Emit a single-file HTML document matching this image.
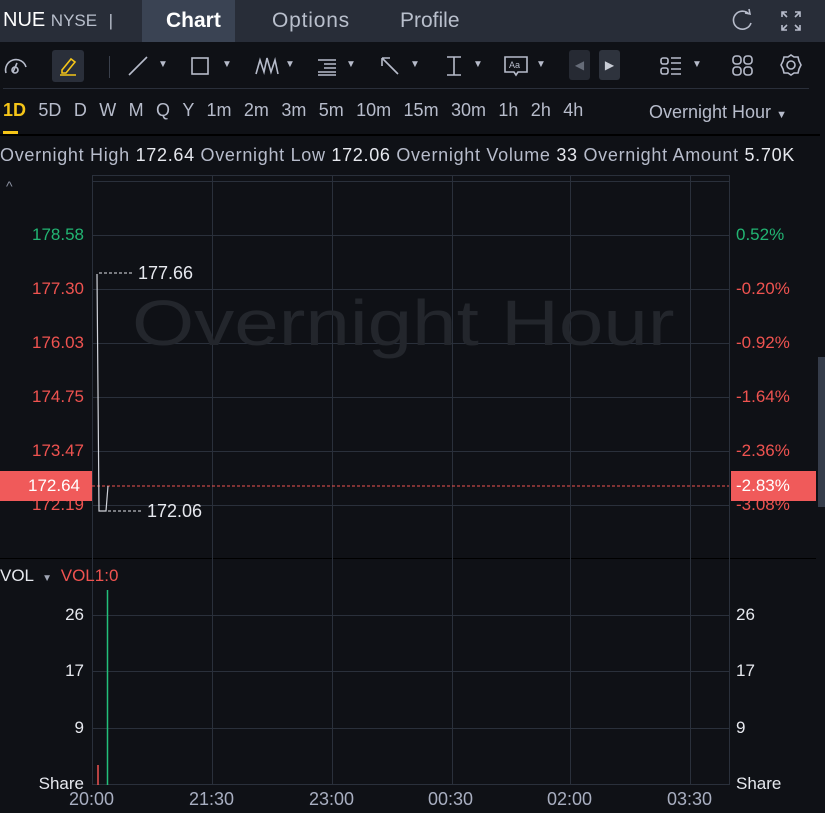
<!DOCTYPE html>
<html><head><meta charset="utf-8"><style>
*{margin:0;padding:0;box-sizing:border-box}
body{width:825px;height:813px;background:#0f1116;font-family:"Liberation Sans",sans-serif;color:#c9cdd6;position:relative;overflow:hidden}
.a{position:absolute;white-space:nowrap}
.hl{position:absolute;height:1px;background:#2a303b}
.vl{position:absolute;width:1px;background:#2a303b}
.r{color:#ef5350}.g{color:#22b573}
.lab{font-size:17px;text-align:right;width:84px;left:0}
.pl{font-size:17px;left:736px}
.tb{stroke:#b7bccb;fill:none;stroke-width:1.6}
.dd{font-size:10px;color:#b7bccb}
</style></head><body>
<!-- header -->
<div class="a" style="left:0;top:0;width:825px;height:42px;background:#282d38"></div>
<div class="a" style="left:142px;top:0;width:93px;height:42px;background:#3a4353"></div>
<div class="a" style="left:3px;top:9px;font-size:20px;color:#fff">NUE <span style="font-size:17px;color:#b9bfcc">NYSE</span> <span style="font-size:17px;color:#b9bfcc;margin-left:6px">|</span></div>
<div class="a" style="left:166px;top:9px;font-size:21px;color:#fff;font-weight:bold">Chart</div>
<div class="a" style="left:272px;top:9px;font-size:21px;color:#b9bfcc;letter-spacing:0.8px">Options</div>
<div class="a" style="left:400px;top:9px;font-size:21px;color:#b9bfcc">Profile</div>
<svg class="a" style="left:730px;top:8px" width="26" height="26"><path d="M19 6 A9 9 0 1 0 21 15" class="tb"/><path d="M15 5 L20 6 L19 1" class="tb"/></svg>
<svg class="a" style="left:780px;top:10px" width="22" height="22"><path d="M2 7V2h5M15 2h5v5M20 15v5h-5M7 20H2v-5M2 2l5 5M20 2l-5 5M20 20l-5-5M2 20l5-5" class="tb"/></svg>
<!-- toolbar -->
<svg class="a" style="left:3px;top:55px" width="26" height="22"><path d="M3 18 A10 10 0 1 1 23 12" class="tb"/><path d="M10 17 L14 8" class="tb"/><circle cx="12" cy="15" r="3" class="tb"/></svg>
<div class="a" style="left:52px;top:50px;width:32px;height:32px;background:#2a2f3a;border-radius:3px"></div>
<svg class="a" style="left:56px;top:54px" width="24" height="24"><path d="M6 16 L15 5 L19 8 L10 19 L6 19Z M4 21 H20" stroke="#f5c518" stroke-width="1.6" fill="none"/></svg>
<div class="a" style="left:109px;top:56px;width:1px;height:22px;background:#3a404c"></div>
<svg class="a" style="left:126px;top:54px" width="24" height="24"><path d="M3 21 L21 3" class="tb"/></svg><div class="a dd" style="left:158px;top:59px">▼</div>
<svg class="a" style="left:188px;top:54px" width="24" height="24"><rect x="4" y="4" width="16" height="16" class="tb"/></svg><div class="a dd" style="left:222px;top:59px">▼</div>
<svg class="a" style="left:254px;top:54px" width="26" height="24"><path d="M2 20 L6 6 L10 18 L13 4 L17 18 L21 6 L24 20" class="tb"/></svg><div class="a dd" style="left:285px;top:59px">▼</div>
<svg class="a" style="left:315px;top:54px" width="24" height="24"><path d="M3 6H21M9 10H21M9 14H21M3 18H21M3 21H21" class="tb"/></svg><div class="a dd" style="left:346px;top:59px">▼</div>
<svg class="a" style="left:378px;top:54px" width="24" height="24"><path d="M4 4L20 20M4 4H12M4 4V12" class="tb"/></svg><div class="a dd" style="left:410px;top:59px">▼</div>
<svg class="a" style="left:442px;top:54px" width="24" height="24"><path d="M5 3H19M12 3V21M5 21H19" class="tb"/></svg><div class="a dd" style="left:473px;top:59px">▼</div>
<svg class="a" style="left:503px;top:54px" width="26" height="24"><path d="M2 3H24V18H15L13 21L11 18H2Z" class="tb"/><text x="6" y="14" font-size="9" fill="#b7bccb" font-family="Liberation Sans">Aa</text></svg><div class="a dd" style="left:536px;top:59px">▼</div>
<div class="a" style="left:569px;top:50px;width:21px;height:30px;background:#262a33;border-radius:3px;color:#666c78;font-size:12px;text-align:center;line-height:30px">◀</div>
<div class="a" style="left:599px;top:50px;width:21px;height:30px;background:#2e333d;border-radius:3px;color:#c9cdd6;font-size:12px;text-align:center;line-height:30px">▶</div>
<svg class="a" style="left:659px;top:54px" width="24" height="24"><rect x="2" y="4" width="7" height="6" rx="2" class="tb"/><rect x="2" y="14" width="7" height="6" rx="2" class="tb"/><path d="M12 4H22M12 9H22M12 15H22M12 20H22" class="tb"/></svg><div class="a dd" style="left:692px;top:59px">▼</div>
<svg class="a" style="left:731px;top:54px" width="24" height="24"><rect x="2" y="2" width="8" height="8" rx="3" class="tb"/><rect x="13" y="2" width="8" height="8" rx="3" class="tb"/><rect x="2" y="13" width="8" height="8" rx="3" class="tb"/><rect x="13" y="13" width="8" height="8" rx="3" class="tb"/></svg>
<svg class="a" style="left:779px;top:53px" width="24" height="24"><path d="M12 2 L15 4 L19 4 L20 8 L22 12 L20 16 L19 20 L15 20 L12 22 L9 20 L5 20 L4 16 L2 12 L4 8 L5 4 L9 4Z" class="tb"/><circle cx="12" cy="12" r="4" class="tb"/></svg>
<div class="hl" style="left:3px;top:88px;width:806px;background:#2a2f3a"></div>
<!-- timeframe -->
<div class="a" style="left:3px;top:100px;font-size:18px;word-spacing:1.2px;color:#b7bccb"><b style="color:#f5c518;font-weight:bold">1D</b> &nbsp;5D &nbsp;D &nbsp;W &nbsp;M &nbsp;Q &nbsp;Y &nbsp;1m &nbsp;2m &nbsp;3m &nbsp;5m &nbsp;10m &nbsp;15m &nbsp;30m &nbsp;1h &nbsp;2h &nbsp;4h</div>
<div class="a" style="left:3px;top:131px;width:15px;height:3px;background:#f5c518"></div>
<div class="a" style="left:649px;top:102px;font-size:18px;color:#b7bccb">Overnight Hour <span style="font-size:11px">▼</span></div>
<div class="hl" style="left:0;top:134px;width:820px;height:2px;background:#000"></div>
<div class="a" style="left:0;top:145px;font-size:18px;letter-spacing:0.7px;color:#b7bccb">Overnight High <span style="color:#e6e8ee">172.64</span> Overnight Low <span style="color:#e6e8ee">172.06</span> Overnight Volume <span style="color:#e6e8ee">33</span> Overnight Amount <span style="color:#e6e8ee">5.70K</span></div>
<!-- grid -->
<div class="hl" style="left:92px;top:175px;width:637px"></div>
<div class="hl" style="left:92px;top:181px;width:637px"></div>
<div class="hl" style="left:92px;top:235px;width:637px"></div>
<div class="hl" style="left:92px;top:289px;width:637px"></div>
<div class="hl" style="left:92px;top:343px;width:637px"></div>
<div class="hl" style="left:92px;top:397px;width:637px"></div>
<div class="hl" style="left:92px;top:451px;width:637px"></div>
<div class="hl" style="left:92px;top:505px;width:637px"></div>
<div class="hl" style="left:0;top:558px;width:816px;background:#000"></div>
<div class="hl" style="left:92px;top:615px;width:637px"></div>
<div class="hl" style="left:92px;top:671px;width:637px"></div>
<div class="hl" style="left:92px;top:728px;width:637px"></div>
<div class="hl" style="left:92px;top:784px;width:637px"></div>
<div class="vl" style="left:92px;top:175px;height:610px"></div>
<div class="vl" style="left:212px;top:175px;height:610px"></div>
<div class="vl" style="left:332px;top:175px;height:610px"></div>
<div class="vl" style="left:452px;top:175px;height:610px"></div>
<div class="vl" style="left:570px;top:175px;height:610px"></div>
<div class="vl" style="left:690px;top:175px;height:610px"></div>
<div class="vl" style="left:729px;top:175px;height:610px"></div>
<div class="a" style="left:132px;top:286px;font-size:64px;color:#23262c;transform:scaleX(1.25);transform-origin:0 0">Overnight Hour</div>
<div class="a" style="left:6px;top:178px;font-size:14px;color:#8a90a0">^</div>
<!-- left labels -->
<div class="a lab g" style="top:225px">178.58</div>
<div class="a lab r" style="top:279px">177.30</div>
<div class="a lab r" style="top:333px">176.03</div>
<div class="a lab r" style="top:387px">174.75</div>
<div class="a lab r" style="top:441px">173.47</div>
<div class="a lab r" style="top:495px">172.19</div>
<div class="a" style="left:0;top:471px;width:92px;height:30px;background:#f05a5a;color:#fff;font-size:17px;text-align:right;padding-right:12px;line-height:30px">172.64</div>
<!-- right labels -->
<div class="a pl g" style="top:225px">0.52%</div>
<div class="a pl r" style="top:279px">-0.20%</div>
<div class="a pl r" style="top:333px">-0.92%</div>
<div class="a pl r" style="top:387px">-1.64%</div>
<div class="a pl r" style="top:441px">-2.36%</div>
<div class="a pl r" style="top:495px">-3.08%</div>
<div class="a" style="left:731px;top:471px;width:85px;height:30px;background:#f05a5a;color:#fff;font-size:17px;padding-left:5px;line-height:30px">-2.83%</div>
<div class="a" style="left:818px;top:357px;width:7px;height:150px;background:#353c4a"></div>
<!-- price line -->
<svg class="a" style="left:0;top:0" width="825" height="813">
<line x1="92" y1="486" x2="729" y2="486" stroke="#ef5350" stroke-dasharray="3,2"/>
<polyline points="97,274 99,511 106,511 108,486" fill="none" stroke="#d0d3da" stroke-width="1.2"/>
<line x1="99" y1="273" x2="132" y2="273" stroke="#e0e2e8" stroke-dasharray="3,2"/>
<line x1="108" y1="511" x2="142" y2="511" stroke="#e0e2e8" stroke-dasharray="3,2"/>
<line x1="98" y1="765" x2="98" y2="785" stroke="#ef5350" stroke-width="1.5"/>
<line x1="107.5" y1="590" x2="107.5" y2="785" stroke="#22c07a" stroke-width="1.5"/>
</svg>
<div class="a" style="left:138px;top:263px;font-size:18px;color:#e6e8ee">177.66</div>
<div class="a" style="left:147px;top:501px;font-size:18px;color:#e6e8ee">172.06</div>
<!-- volume -->
<div class="a" style="left:0;top:566px;font-size:17px;color:#e6e8ee">VOL <span style="font-size:10px;color:#a0a6b4;margin:0 4px">▼</span> <span class="r">VOL1:0</span></div>
<div class="a lab" style="top:605px;color:#e6e8ee">26</div>
<div class="a lab" style="top:661px;color:#e6e8ee">17</div>
<div class="a lab" style="top:718px;color:#e6e8ee">9</div>
<div class="a lab" style="top:774px;color:#e6e8ee">Share</div>
<div class="a pl" style="top:605px;color:#e6e8ee">26</div>
<div class="a pl" style="top:661px;color:#e6e8ee">17</div>
<div class="a pl" style="top:718px;color:#e6e8ee">9</div>
<div class="a pl" style="top:774px;color:#e6e8ee">Share</div>
<div class="a" style="left:69px;top:789px;font-size:18px;color:#a8aec0">20:00</div>
<div class="a" style="left:189px;top:789px;font-size:18px;color:#a8aec0">21:30</div>
<div class="a" style="left:309px;top:789px;font-size:18px;color:#a8aec0">23:00</div>
<div class="a" style="left:428px;top:789px;font-size:18px;color:#a8aec0">00:30</div>
<div class="a" style="left:547px;top:789px;font-size:18px;color:#a8aec0">02:00</div>
<div class="a" style="left:667px;top:789px;font-size:18px;color:#a8aec0">03:30</div>
</body></html>
